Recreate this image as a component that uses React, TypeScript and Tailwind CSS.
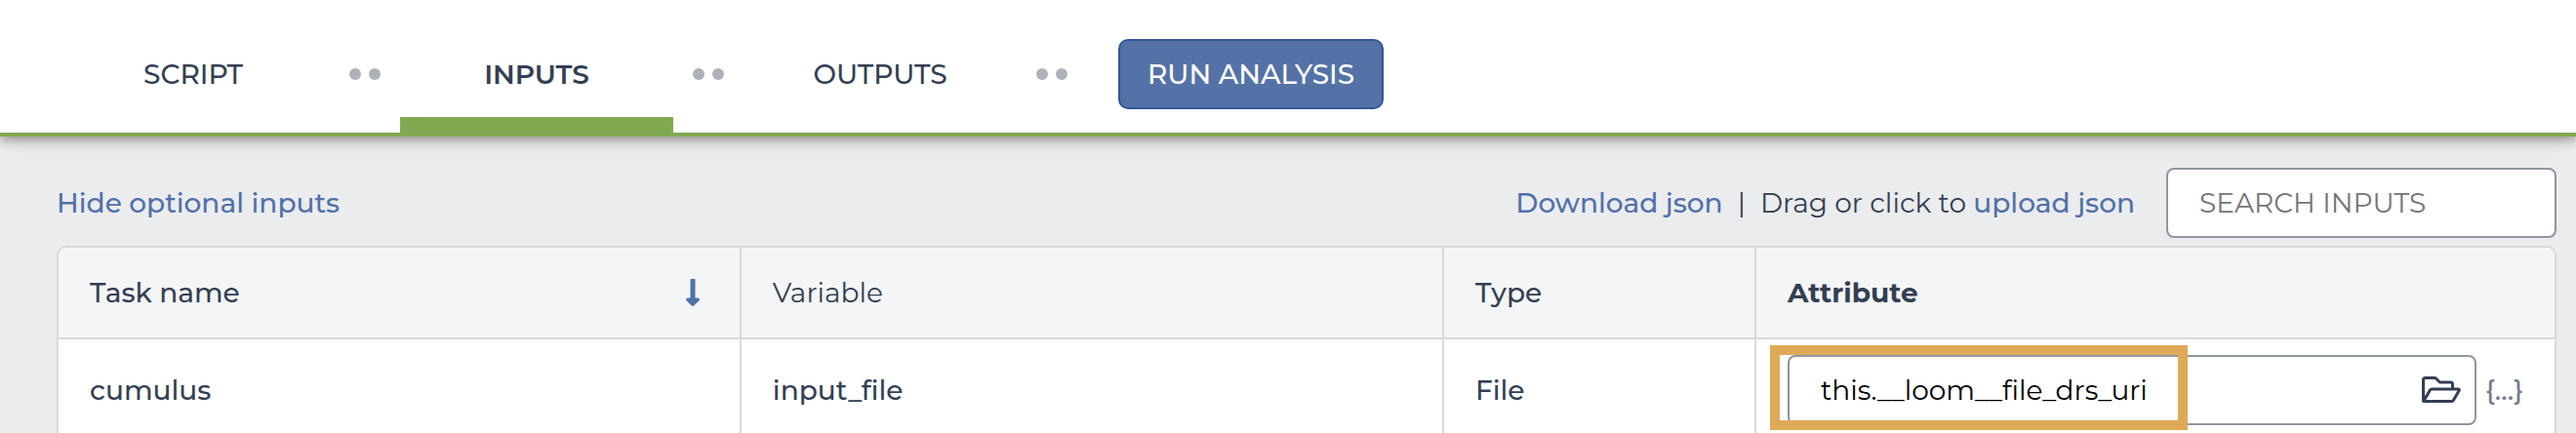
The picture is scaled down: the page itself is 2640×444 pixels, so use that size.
import { Fragment, useState } from "react";
import { FaLongArrowAltDown } from "react-icons/fa";

const tabs = ["Script", "Inputs", "Outputs"];

const FolderOpen = () => (
  <svg
    viewBox="0 0 40 28"
    className="h-7 w-10"
    fill="none"
    stroke="currentColor"
    strokeWidth="3"
    strokeLinejoin="round"
    strokeLinecap="round"
    aria-hidden="true"
  >
    <path d="M1.5 25V3.5Q1.5 1.5 3.5 1.5H13Q14 1.5 14.8 2.3L17.6 5.2Q18.4 6 19.5 6H29.5Q31.5 6 31.5 8V12.5" />
    <path d="M2 25L8.4 14Q9 13 10.2 13H37Q39 13 38.2 14.5L32.6 24Q31.8 25.5 30.4 25.5H3Q1.5 25.5 2 25Z" />
  </svg>
);

const StepDots = () => (
  <div className="mx-5 flex gap-2" aria-hidden="true">
    <span className="size-3 rounded-full bg-[#adb2ba]" />
    <span className="size-3 rounded-full bg-[#adb2ba]" />
  </div>
);

function StepBar() {
  const [active, setActive] = useState("Inputs");

  return (
    <nav className="relative z-10 flex h-[140px] items-center border-b-4 border-[#80aa51] bg-white pt-4 pl-[58px] shadow-[0_4px_10px_rgba(0,0,0,0.33),0_6px_24px_rgba(0,0,0,0.06)]">
      {tabs.map((tab) => (
        <Fragment key={tab}>
          <button
            type="button"
            onClick={() => setActive(tab)}
            className={
              tab === active
                ? "w-[280px] self-stretch border-b-[16px] border-[#80aa51] pt-4 text-center font-semibold uppercase"
                : "w-[280px] self-stretch text-center font-medium uppercase"
            }
          >
            {tab}
          </button>
          <StepDots />
        </Fragment>
      ))}
      <button
        type="button"
        className="ml-8 h-[72px] w-[272px] rounded-[10px] border-2 border-[#335796] bg-[#5572a7] text-center font-medium whitespace-nowrap text-white uppercase"
      >
        Run analysis
      </button>
    </nav>
  );
}

function Toolbar() {
  return (
    <div className="flex items-center">
      <a href="#optional" className="font-medium text-[#5171a9]">
        Hide optional inputs
      </a>
      <div className="ml-auto flex items-center">
        <a href="#download" className="font-medium text-[#5171a9]">
          Download json
        </a>
        <span className="mx-[15px]">|</span>
        <span>
          Drag or click to{" "}
          <a href="#upload" className="font-medium text-[#5171a9]">
            upload json
          </a>
        </span>
      </div>
      <input
        type="search"
        aria-label="Search inputs"
        placeholder="SEARCH INPUTS"
        className="ml-8 h-[72px] w-[400px] rounded-lg border-2 border-[#8f95a0] bg-white px-8 placeholder:text-[#757575]"
      />
    </div>
  );
}

function InputsTable() {
  const [attribute, setAttribute] = useState("this.__loom__file_drs_uri");

  return (
    <div className="mt-2 overflow-hidden rounded-t-[10px] border-2 border-[#d7d9dd] bg-white">
      <table className="w-full table-fixed border-separate border-spacing-0 text-left">
        <thead className="bg-[#f4f5f7]">
          <tr className="h-[94px] *:border-b-2 *:border-[#d7d9dd] *:px-8">
            <th scope="col" className="w-[27.36%] border-r-2 font-medium">
              <div className="flex items-center justify-between">
                Task name
                <FaLongArrowAltDown className="size-8 text-[#5171a9]" />
              </div>
            </th>
            <th scope="col" className="w-[28.15%] border-r-2 font-normal">
              Variable
            </th>
            <th scope="col" className="w-[12.51%] border-r-2 font-medium">
              Type
            </th>
            <th scope="col" className="font-bold">
              Attribute
            </th>
          </tr>
        </thead>
        <tbody>
          <tr className="h-[104px] font-medium *:border-[#d7d9dd] *:pl-8">
            <td className="border-r-2">cumulus</td>
            <td className="border-r-2">input_file</td>
            <td className="border-r-2">File</td>
            <td className="pr-8">
              <div className="relative flex items-center">
                <div className="flex h-[72px] flex-1 items-center rounded-lg border-2 border-[#8f95a0] pr-3.5">
                  <input
                    type="text"
                    aria-label="input_file attribute"
                    value={attribute}
                    onChange={(e) => setAttribute(e.target.value)}
                    className="min-w-0 flex-1 pl-8 font-normal text-black outline-none [font-variant-ligatures:none]"
                  />
                  <button type="button" aria-label="Browse files">
                    <FolderOpen />
                  </button>
                </div>
                <button type="button" className="w-12 text-right text-[#747c8a]">
                  {"{…}"}
                </button>
                {/* Callout frame around the attribute value */}
                <div className="pointer-events-none absolute -top-2.5 -left-[18px] h-[87px] w-[428px] border-10 border-[#dfaa58]" />
              </div>
            </td>
          </tr>
        </tbody>
      </table>
    </div>
  );
}

export default function App() {
  return (
    <div className="h-screen overflow-hidden bg-[#ebecee] font-['Montserrat','Inter',sans-serif] text-[28px] leading-9 text-[#333f52]">
      <StepBar />
      <main className="pt-8 pr-5 pl-[58px]">
        <Toolbar />
        <InputsTable />
      </main>
    </div>
  );
}
